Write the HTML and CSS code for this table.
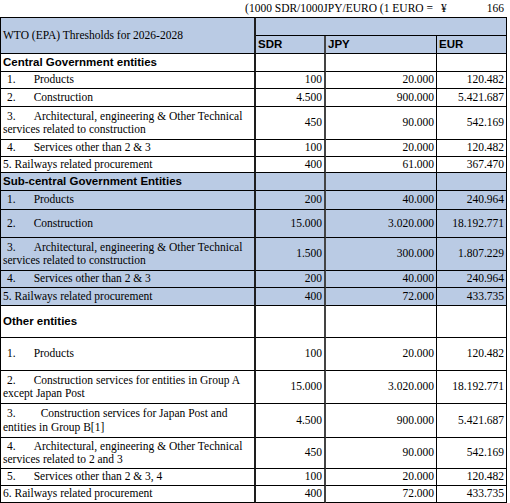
FILE: index.html
```html
<!DOCTYPE html>
<html lang="en">
<head>
<meta charset="utf-8">
<title>WTO (EPA) Thresholds</title>
<link rel="stylesheet" href="styles.css">
</head>
<body>
<div class="sheet">
  <div class="c cap cap-note">(1000 SDR/1000JPY/EURO (1 EURO =</div>
  <div class="c cap cap-rate"><span>¥</span><span>166</span></div>

  <div class="c lbl blue top title">WTO (EPA) Thresholds for 2026-2028</div>
  <div class="c blue top merged"></div>
  <div class="c sdr blue hd">SDR</div>
  <div class="c blue hd">JPY</div>
  <div class="c blue hd">EUR</div>

  <div class="c lbl hd">Central Government entities</div>
  <div class="c sdr"></div><div class="c"></div><div class="c"></div>

  <div class="c lbl"><div class="t"><span class="n">1.</span>Products</div></div>
  <div class="c sdr num">100</div><div class="c num">20.000</div><div class="c num">120.482</div>

  <div class="c lbl"><div class="t"><span class="n">2.</span>Construction</div></div>
  <div class="c sdr num">4.500</div><div class="c num">900.000</div><div class="c num">5.421.687</div>

  <div class="c lbl"><div class="t"><span class="n">3.</span><span>Architectural, engineering &amp; Other Technical</span><br><span>services related to construction</span></div></div>
  <div class="c sdr num">450</div><div class="c num">90.000</div><div class="c num">542.169</div>

  <div class="c lbl"><div class="t"><span class="n">4.</span>Services other than 2 &amp; 3</div></div>
  <div class="c sdr num">100</div><div class="c num">20.000</div><div class="c num">120.482</div>

  <div class="c lbl"><div class="p">5. Railways related procurement</div></div>
  <div class="c sdr num">400</div><div class="c num">61.000</div><div class="c num">367.470</div>

  <div class="c lbl blue hd">Sub-central Government Entities</div>
  <div class="c sdr blue"></div><div class="c blue"></div><div class="c blue"></div>

  <div class="c lbl blue"><div class="t"><span class="n">1.</span>Products</div></div>
  <div class="c sdr blue num">200</div><div class="c blue num">40.000</div><div class="c blue num">240.964</div>

  <div class="c lbl blue"><div class="t"><span class="n">2.</span>Construction</div></div>
  <div class="c sdr blue num">15.000</div><div class="c blue num">3.020.000</div><div class="c blue num">18.192.771</div>

  <div class="c lbl blue"><div class="t"><span class="n">3.</span><span>Architectural, engineering &amp; Other Technical</span><br><span>services related to construction</span></div></div>
  <div class="c sdr blue num">1.500</div><div class="c blue num">300.000</div><div class="c blue num">1.807.229</div>

  <div class="c lbl blue"><div class="t"><span class="n">4.</span>Services other than 2 &amp; 3</div></div>
  <div class="c sdr blue num">200</div><div class="c blue num">40.000</div><div class="c blue num">240.964</div>

  <div class="c lbl blue"><div class="p">5. Railways related procurement</div></div>
  <div class="c sdr blue num">400</div><div class="c blue num">72.000</div><div class="c blue num">433.735</div>

  <div class="c lbl hd">Other entities</div>
  <div class="c sdr"></div><div class="c"></div><div class="c"></div>

  <div class="c lbl"><div class="t"><span class="n">1.</span>Products</div></div>
  <div class="c sdr num">100</div><div class="c num">20.000</div><div class="c num">120.482</div>

  <div class="c lbl"><div class="t"><span class="n">2.</span><span>Construction services for entities in Group A</span><br><span>except Japan Post</span></div></div>
  <div class="c sdr num">15.000</div><div class="c num">3.020.000</div><div class="c num">18.192.771</div>

  <div class="c lbl"><div class="t"><span class="n wide">3.</span><span>Construction services for Japan Post and</span><br><span>entities in Group B[1]</span></div></div>
  <div class="c sdr num">4.500</div><div class="c num">900.000</div><div class="c num">5.421.687</div>

  <div class="c lbl"><div class="t"><span class="n">4.</span><span>Architectural, engineering &amp; Other Technical</span><br><span>services related to 2 and 3</span></div></div>
  <div class="c sdr num">450</div><div class="c num">90.000</div><div class="c num">542.169</div>

  <div class="c lbl"><div class="t"><span class="n">5.</span>Services other than 2 &amp; 3, 4</div></div>
  <div class="c sdr num">100</div><div class="c num">20.000</div><div class="c num">120.482</div>

  <div class="c lbl"><div class="p">6. Railways related procurement</div></div>
  <div class="c sdr num">400</div><div class="c num">72.000</div><div class="c num">433.735</div>
</div>
</body>
</html>
```

FILE: styles.css
```css
html, body {
  margin: 0;
  padding: 0;
  background: #ffffff;
}

body {
  font-family: "Liberation Serif", "Times New Roman", serif;
  font-size: 11.5px;
  color: #000;
}

.sheet {
  display: grid;
  grid-template-columns: 255px 70px 111px 70px;
  grid-template-rows:
    17px 19px 18px
    18px 17px 18px 33px 17px 16px
    18px 19px 28px 33px 17px 18px
    32px 33px 33px 34px 31px 17px 17px;
  margin-left: 1px;
  width: 507px;
}

.c {
  box-sizing: border-box;
  display: flex;
  align-items: center;
  padding: 0 2px;
  border-right: 1px solid #000;
  border-bottom: 1px solid #000;
  line-height: 13.5px;
  min-width: 0;
}

.lbl {
  border-right: 2px solid #1e1e1e;
  border-left: 1px solid #000;
  margin-left: -1px;
}

.sdr {
  border-right: 2px solid #444;
}

.blue {
  background: #bacbe4;
}

.top {
  border-top: 1px solid #000;
}

.title {
  grid-row: span 2;
}

.merged {
  grid-column: span 3;
}

.hd {
  font-family: "Liberation Sans", Arial, sans-serif;
  font-weight: bold;
  font-size: 11.5px;
}

.num {
  justify-content: flex-end;
}

.t {
  text-indent: 4px;
}

.n {
  padding-right: 18px;
}

.n.wide {
  padding-right: 25px;
}

.cap {
  border: none;
  background: transparent;
}

.cap-note {
  grid-column: span 3;
  justify-content: flex-end;
  padding-right: 4px;
  white-space: nowrap;
}

.cap-rate {
  justify-content: space-between;
  padding: 0 3px 0 4px;
}
```
